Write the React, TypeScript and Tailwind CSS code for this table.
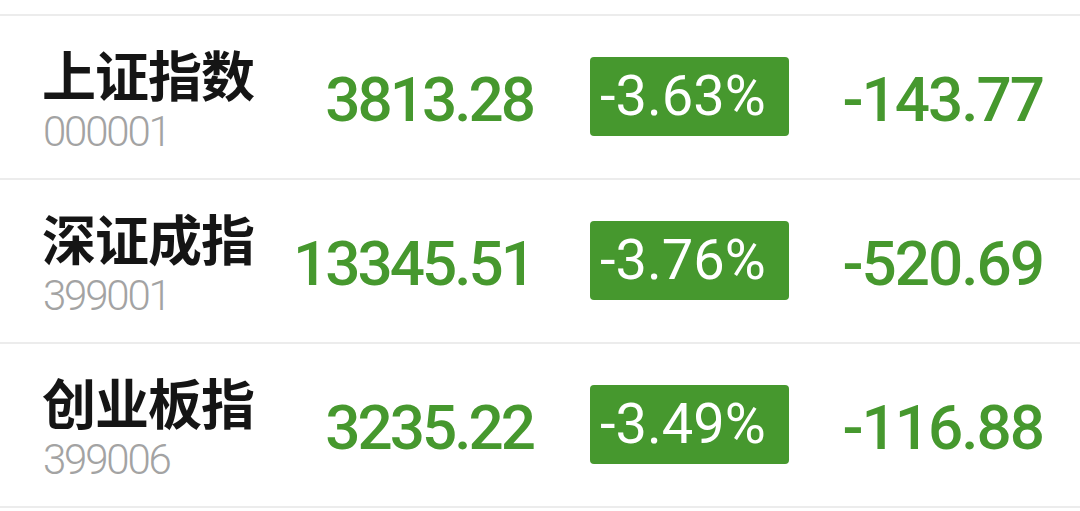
import React from "react";

const rows = [
  { name: "上证指数", code: "000001", price: "3813.28", pct: "-3.63%", chg: "-143.77" },
  { name: "深证成指", code: "399001", price: "13345.51", pct: "-3.76%", chg: "-520.69" },
  { name: "创业板指", code: "399006", price: "3235.22", pct: "-3.49%", chg: "-116.88" },
];

export default function App() {
  return (
    <div className="w-[1080px] h-[511px] bg-white overflow-hidden pt-[14px]">
      <div className="border-t-2 border-[#ececec]">
        {rows.map((r) => (
          <div key={r.code} className="h-[164px] border-b-2 border-[#ececec] flex items-center">
            <div className="ml-[42px] w-[238px] flex flex-col pt-[4px]">
              <div
                className="text-[54px] font-bold leading-[56px] text-[#151515] tracking-[-1px]"
                style={{ fontFamily: '"Noto Sans CJK SC", sans-serif' }}
              >
                {r.name}
              </div>
              <div
                className="text-[42px] leading-[40px] text-[#a3a3a3] font-light tracking-[-2.2px] mt-[10px] ml-[1px]"
                style={{ fontFamily: "Roboto, sans-serif" }}
              >
                {r.code}
              </div>
            </div>
            <div
              className="w-[253px] text-right text-[62px] font-medium text-[#46982e] tracking-[-3px] leading-none pt-[6px]"
              style={{ fontFamily: "Roboto, sans-serif" }}
            >
              {r.price}
            </div>
            <div className="ml-[57px] w-[199px] h-[79px] rounded-[4px] bg-[#46982e] flex items-center pl-[10px] mb-[2px]">
              <span
                className="text-white text-[56px] leading-none"
                style={{ fontFamily: "Roboto, sans-serif" }}
              >
                {r.pct}
              </span>
            </div>
            <div
              className="flex-1 text-right pr-[37px] text-[62px] font-medium text-[#46982e] tracking-[-2px] leading-none pt-[6px]"
              style={{ fontFamily: "Roboto, sans-serif" }}
            >
              {r.chg}
            </div>
          </div>
        ))}
      </div>
    </div>
  );
}
